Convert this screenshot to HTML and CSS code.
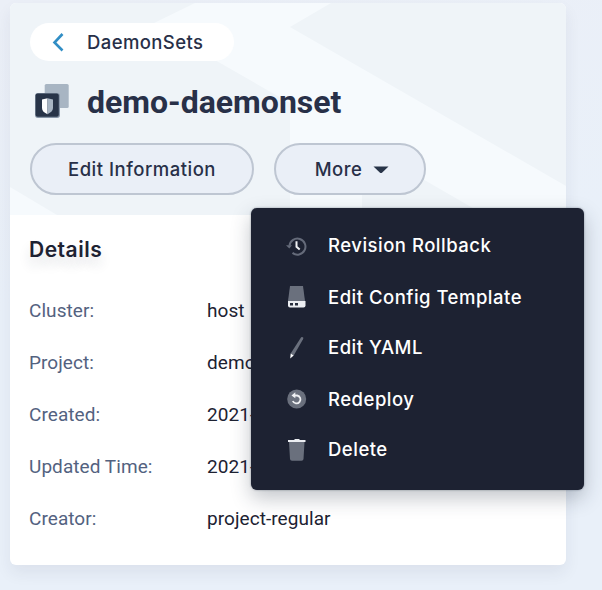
FILE: index.html
```html
<!DOCTYPE html>
<html lang="en">
<head>
<meta charset="utf-8">
<title>demo-daemonset</title>
<link rel="stylesheet" href="styles.css">
</head>
<body>
<main class="card">
  <header class="head">
    <svg class="pattern" viewBox="0 0 556 212" preserveAspectRatio="none"><path fill="#f6fafd" d="M185 0h136l-41 24 276 159v29h-81L352 141v71h-72V100L142 21zM0 184l47 28H0z"/></svg>
    <a class="back"><svg width="12" height="20" viewBox="0 0 12 20"><path d="M10.500 2L2.500 10.500l8 8" fill="none" stroke="#318ec5" stroke-width="2.600"/></svg><span>DaemonSets</span></a>
    <div class="title-row">
      <svg width="36" height="36" viewBox="0 0 36 36"><rect x="10.700" y="0" width="24" height="24" rx="1.600" fill="#a8b5c3"/><rect x="1" y="9" width="25" height="25" rx="3" fill="#8795a7"/><rect x="1.600" y="9.600" width="23.200" height="23.200" rx="2" fill="#283448"/><path d="M8 15.500l5.500-1.300v16C9.500 28.500 8 26.500 8 24z" fill="#fff"/><path d="M13.500 14.200l5.500 1.300V24c0 2.500-2 4.500-5.500 6.200z" fill="#a8b5c3"/></svg>
      <h1>demo-daemonset</h1>
    </div>
    <div class="actions">
      <button class="btn edit"><span>Edit Information</span></button>
      <div class="more-wrap">
        <button class="btn more"><span>More</span><svg width="16" height="8" viewBox="0 0 16 8"><path d="M.5.5h15L9 6.700Q8 7.500 7 6.700z" fill="#283448"/></svg></button>
        <ul class="menu">
          <li><svg viewBox="0 0 24 24"><path d="M4.500 11.700a8 8 0 1 1 3 7.200" fill="none" stroke="#656b7a" stroke-width="2"/><path d="M1 11.300h6L4.300 14.500z" fill="#656b7a"/><path d="M11.500 7.300v5.500l3.200 2.700" fill="none" stroke="#eff0f3" stroke-width="2"/></svg><span>Revision Rollback</span></li>
          <li class="low"><svg viewBox="0 0 24 24"><path d="M5 1h13l2 15H3z" fill="#6a707d"/><path d="M3 16h17.500v4.500q0 2-2 2H5q-2 0-2-2z" fill="#eceef2"/><path d="M5 18h3v2.500H5zm5 0h3v2.500h-3z" fill="#252c3b"/></svg><span>Edit Config Template</span></li>
          <li><svg viewBox="0 0 24 24"><path d="M15.500 2.300l.7-1q1-.7 2 .2.400.5-.2 1.700L8.700 19.500l-3-1.900z" fill="#6a707d"/><path d="M5.700 17.600l3 1.900-3.500 3z" fill="#fff"/></svg><span>Edit YAML</span></li>
          <li class="low"><svg viewBox="0 0 24 24"><circle cx="11.700" cy="12" r="9.500" fill="#6a707d"/><path d="M8.500 8.500h3.700a4 4 0 1 1-4.400 5.500" fill="none" stroke="#eff0f3" stroke-width="1.800"/><path d="M6.500 8.500l3.800-3.200v6z" fill="#eff0f3"/></svg><span>Redeploy</span></li>
          <li><svg viewBox="0 0 24 24"><path d="M4 4h15.500l-1 17q-.1 1.700-2 1.700H7q-1.900 0-2-1.700z" fill="#6a707d"/><path d="M3 2h6l1-1h4l1 1h5.500v2H3z" fill="#eceef2"/></svg><span>Delete</span></li>
        </ul>
      </div>
    </div>
  </header>
  <section class="details">
    <h2>Details</h2>
    <dl>
      <div><dt>Cluster:</dt><dd>host</dd></div>
      <div><dt>Project:</dt><dd>demo</dd></div>
      <div><dt>Created:</dt><dd>2021-</dd></div>
      <div><dt>Updated Time:</dt><dd>2021-</dd></div>
      <div><dt>Creator:</dt><dd>project-regular</dd></div>
    </dl>
  </section>
</main>
</body>
</html>
```
FILE: styles.css
```css
* { box-sizing: border-box; }
body { margin: 0; padding: 3px 36px 25px 10px; width: 602px; height: 590px; overflow: hidden; background: linear-gradient(170deg, #ebeff7, #e9f0f9 45%, #e9f0f9); font-family: Inter, "Liberation Sans", sans-serif; color: #283048; }
svg { display: block; flex: none; }
.card { height: 562px; border-radius: 6px; background: #fff; box-shadow: 0 8px 16px rgba(36, 46, 66, .07); }
.head { position: relative; height: 212px; padding: 20px; border-radius: 6px 6px 0 0; background: #eff4f8; }
.pattern { position: absolute; left: 0; top: 0; width: 556px; height: 212px; border-radius: 6px 6px 0 0; }
.back { position: relative; display: flex; align-items: center; width: 204px; height: 38px; padding-left: 22px; gap: 23px; border-radius: 19px; background: #fff; font-size: 18.500px; font-weight: 500; letter-spacing: .4px; }
.title-row { position: relative; display: flex; align-items: center; gap: 17px; height: 42px; margin-top: 20px; padding-left: 4px; }
h1 { margin: 0; font: 700 32px/42px Roboto, sans-serif; }
.actions { position: relative; display: flex; gap: 20px; margin-top: 20px; }
.btn { display: flex; align-items: center; justify-content: center; height: 52px; padding: 0 0 1px; border: 2px solid #bec6d2; border-radius: 26px; background: #eaeff7; color: #283048; font: 500 18.500px Inter, sans-serif; letter-spacing: .5px; }
.edit { width: 224px; }
.more-wrap { position: relative; }
.more { width: 152px; gap: 11px; padding-left: 4px; }
.more svg { margin-top: 2px; }
.menu { position: absolute; left: -23px; top: 64.500px; z-index: 2; width: 333px; height: 282px; margin: 0; padding: 12px 0 0 34px; list-style: none; border-radius: 6px; background: #1d2232; box-shadow: 0 8px 20px rgba(36, 46, 66, .28), 0 0 2px rgba(36, 46, 66, .5); color: #fff; font-size: 18.500px; font-weight: 500; letter-spacing: .5px; }
.menu li { display: flex; align-items: center; gap: 19px; height: 51px; }
.menu .low { padding-top: 2px; }
.menu svg { width: 24px; height: 24px; margin-top: 2px; }
.menu .low svg { margin-top: 0; }
.details { padding: 20px 19px; }
h2 { margin: 0; font: 600 21px/30px Inter, sans-serif; letter-spacing: .5px; color: #1d2232; text-shadow: 0 8px 12px rgba(36, 46, 66, .15); }
dl { margin: 20px 0 0; font: 400 19px/52px Roboto, sans-serif; letter-spacing: .06px; }
dl div { display: grid; grid-template-columns: 178px 1fr; }
dt { color: #53627f; }
dd { margin: 0; color: #1d2232; white-space: nowrap; }
```
